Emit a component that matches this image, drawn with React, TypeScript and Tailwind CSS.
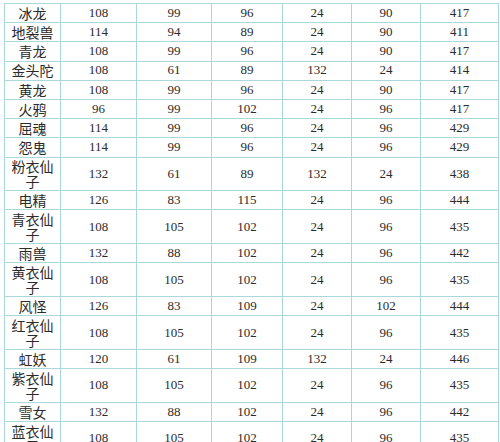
import React from "react";

const rows: [string, number, number, number, number, number, number][] = [
  ["冰龙", 108, 99, 96, 24, 90, 417],
  ["地裂兽", 114, 94, 89, 24, 90, 411],
  ["青龙", 108, 99, 96, 24, 90, 417],
  ["金头陀", 108, 61, 89, 132, 24, 414],
  ["黄龙", 108, 99, 96, 24, 90, 417],
  ["火鸦", 96, 99, 102, 24, 96, 417],
  ["屈魂", 114, 99, 96, 24, 96, 429],
  ["怨鬼", 114, 99, 96, 24, 96, 429],
  ["粉衣仙子", 132, 61, 89, 132, 24, 438],
  ["电精", 126, 83, 115, 24, 96, 444],
  ["青衣仙子", 108, 105, 102, 24, 96, 435],
  ["雨兽", 132, 88, 102, 24, 96, 442],
  ["黄衣仙子", 108, 105, 102, 24, 96, 435],
  ["风怪", 126, 83, 109, 24, 102, 444],
  ["红衣仙子", 108, 105, 102, 24, 96, 435],
  ["虹妖", 120, 61, 109, 132, 24, 446],
  ["紫衣仙子", 108, 105, 102, 24, 96, 435],
  ["雪女", 132, 88, 102, 24, 96, 442],
  ["蓝衣仙子", 108, 105, 102, 24, 96, 435],
];

export default function App() {
  return (
    <div className="w-[500px] h-[442px] overflow-hidden bg-white pt-[3px] pl-[4px]">
      <table
        className="table-fixed border-collapse w-[494px] text-[#2b2b2b]"
        style={{ fontFamily: '"Liberation Serif", "Noto Sans CJK SC", serif' }}
      >
        <colgroup>
          <col className="w-[56px]" />
          <col className="w-[76px]" />
          <col className="w-[75px]" />
          <col className="w-[71px]" />
          <col className="w-[69px]" />
          <col className="w-[69px]" />
          <col className="w-[78px]" />
        </colgroup>
        <tbody>
          {rows.map((r) => (
            <tr key={r[0]}>
              <td className="border border-[#a9d9dc] text-center align-middle px-[2px] py-[1.8px] leading-[14.6px] text-[14px]" style={{ fontFamily: '"Noto Sans CJK SC", sans-serif' }}>
                {r[0]}
              </td>
              {r.slice(1).map((v, i) => (
                <td key={i} className="border border-[#a9d9dc] text-center align-middle py-[1.8px] leading-[14.6px] text-[13px]">
                  {v}
                </td>
              ))}
            </tr>
          ))}
        </tbody>
      </table>
    </div>
  );
}
